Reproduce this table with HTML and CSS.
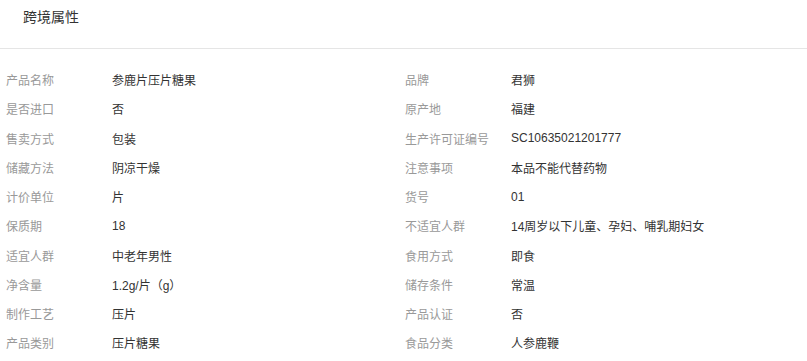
FILE: index.html
```html
<!DOCTYPE html>
<html lang="zh-CN">
<head>
    <meta charset="UTF-8">
    <title>跨境属性</title>
    <link rel="stylesheet" href="styles.css">
</head>
<body>
    <div class="panel">
        <div class="panel-title">跨境属性</div>
        <div class="attr-list">
            <div class="attr"><span class="attr-label">产品名称</span><span class="attr-value">参鹿片压片糖果</span></div>
            <div class="attr"><span class="attr-label">品牌</span><span class="attr-value">君狮</span></div>
            <div class="attr"><span class="attr-label">是否进口</span><span class="attr-value">否</span></div>
            <div class="attr"><span class="attr-label">原产地</span><span class="attr-value">福建</span></div>
            <div class="attr"><span class="attr-label">售卖方式</span><span class="attr-value">包装</span></div>
            <div class="attr"><span class="attr-label">生产许可证编号</span><span class="attr-value">SC10635021201777</span></div>
            <div class="attr"><span class="attr-label">储藏方法</span><span class="attr-value">阴凉干燥</span></div>
            <div class="attr"><span class="attr-label">注意事项</span><span class="attr-value">本品不能代替药物</span></div>
            <div class="attr"><span class="attr-label">计价单位</span><span class="attr-value">片</span></div>
            <div class="attr"><span class="attr-label">货号</span><span class="attr-value">01</span></div>
            <div class="attr"><span class="attr-label">保质期</span><span class="attr-value">18</span></div>
            <div class="attr"><span class="attr-label">不适宜人群</span><span class="attr-value">14周岁以下儿童、孕妇、哺乳期妇女</span></div>
            <div class="attr"><span class="attr-label">适宜人群</span><span class="attr-value">中老年男性</span></div>
            <div class="attr"><span class="attr-label">食用方式</span><span class="attr-value">即食</span></div>
            <div class="attr"><span class="attr-label">净含量</span><span class="attr-value">1.2g/片（g）</span></div>
            <div class="attr"><span class="attr-label">储存条件</span><span class="attr-value">常温</span></div>
            <div class="attr"><span class="attr-label">制作工艺</span><span class="attr-value">压片</span></div>
            <div class="attr"><span class="attr-label">产品认证</span><span class="attr-value">否</span></div>
            <div class="attr"><span class="attr-label">产品类别</span><span class="attr-value">压片糖果</span></div>
            <div class="attr"><span class="attr-label">食品分类</span><span class="attr-value">人参鹿鞭</span></div>
        </div>
    </div>
</body>
</html>
```

FILE: styles.css
```css
body {
    margin: 0;
    background-color: #fff;
    font-family: "Liberation Sans", Arial, "Noto Sans CJK SC", sans-serif;
    color: #333;
}
.panel {
    width: 100%;
}
.panel-title {
    height: 48px;
    line-height: 34px;
    padding-left: 23px;
    font-size: 14px;
    color: #333;
    border-bottom: 1px solid #e5e5e5;
}
.attr-list {
    display: grid;
    grid-template-columns: 399px 1fr;
    grid-auto-rows: 29.25px;
    padding: 16px 0 0 6px;
    font-size: 12px;
}
.attr {
    display: flex;
    align-items: center;
}
.attr-label {
    width: 106px;
    flex-shrink: 0;
    color: #999;
}
.attr-value {
    color: #333;
}
```
